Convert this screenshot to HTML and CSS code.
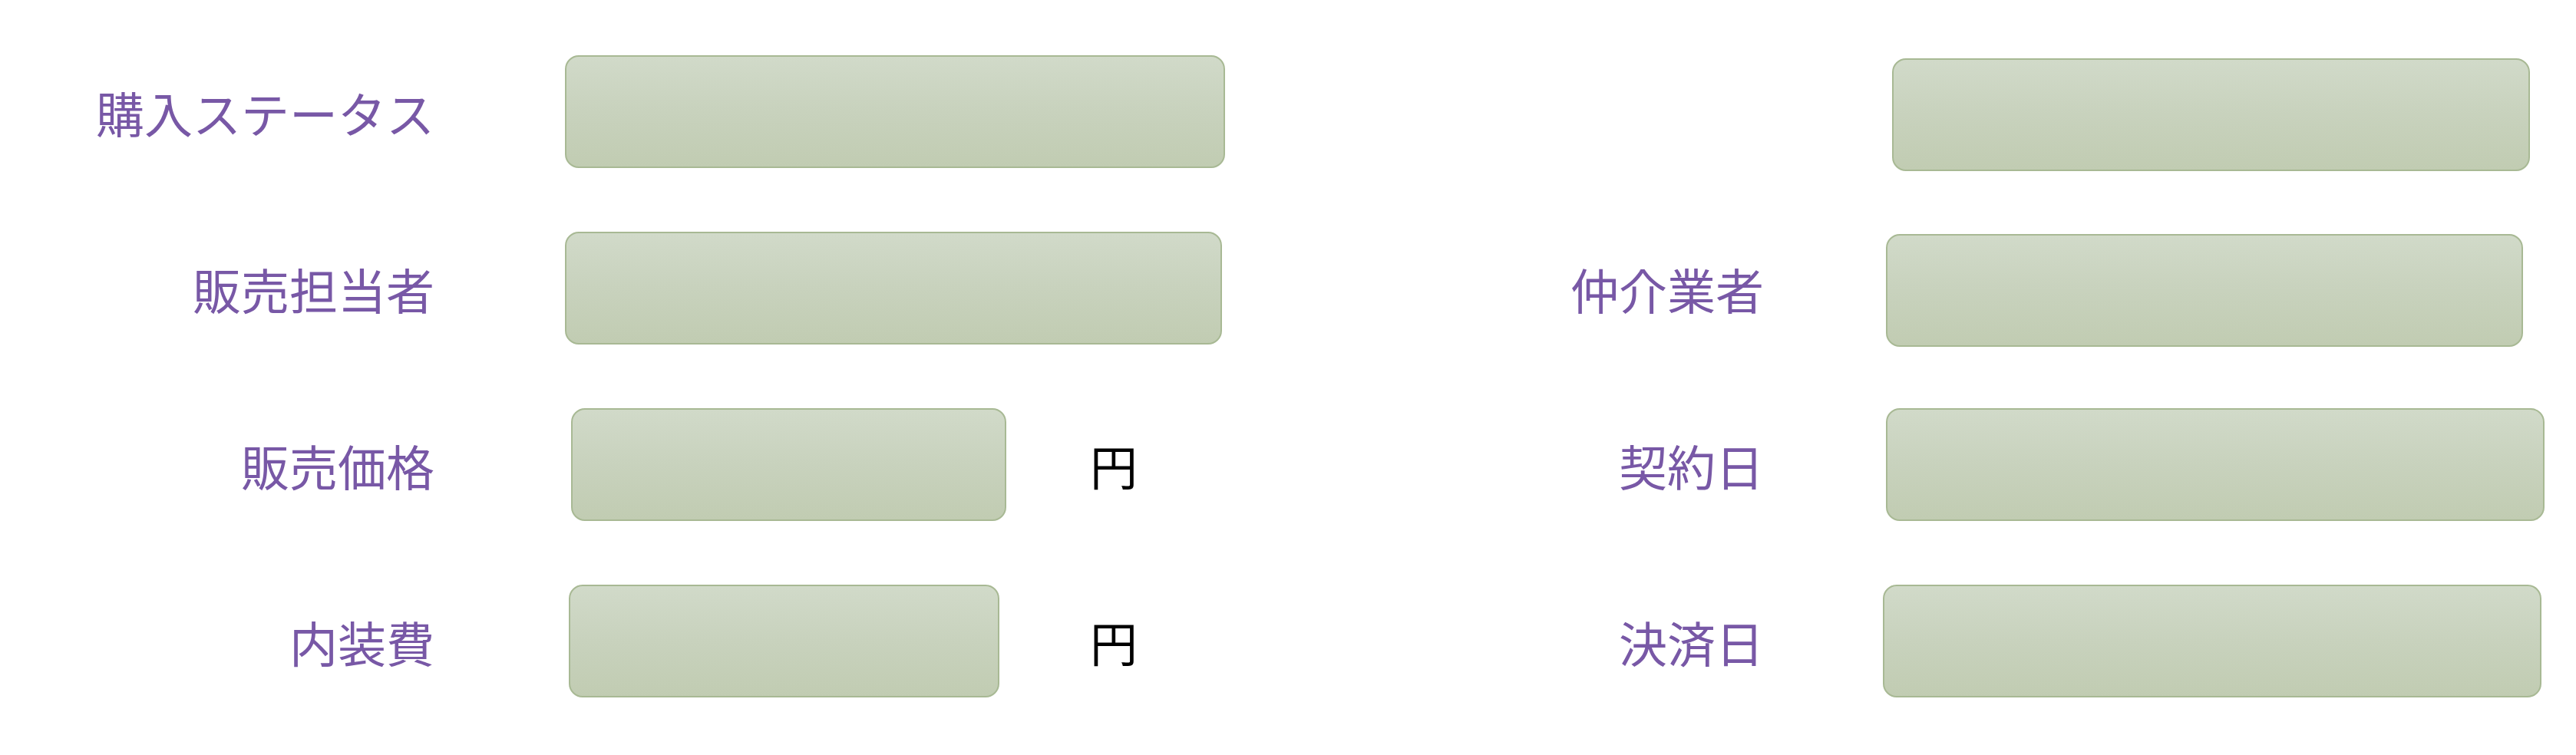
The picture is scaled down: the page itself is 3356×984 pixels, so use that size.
FILE: index.html
```html
<!DOCTYPE html>
<html lang="ja">
<head>
<meta charset="utf-8">
<title>購入情報</title>
<link rel="stylesheet" href="styles.css">
</head>
<body>
<main class="form">
  <div class="field field--left">
    <span class="label">購入ステータス</span>
    <div class="box box--r1l"></div>
  </div>
  <div class="field field--right">
    <span class="label"></span>
    <div class="box box--r1r box--down"></div>
  </div>

  <div class="field field--left">
    <span class="label">販売担当者</span>
    <div class="box box--r2l"></div>
  </div>
  <div class="field field--right">
    <span class="label">仲介業者</span>
    <div class="box box--r2r box--down-sm"></div>
  </div>

  <div class="field field--left">
    <span class="label">販売価格</span>
    <div class="box box--r3l"></div>
    <span class="unit unit--r3">円</span>
  </div>
  <div class="field field--right">
    <span class="label">契約日</span>
    <div class="box box--r3r"></div>
  </div>

  <div class="field field--left">
    <span class="label">内装費</span>
    <div class="box box--r4l"></div>
    <span class="unit unit--r4">円</span>
  </div>
  <div class="field field--right">
    <span class="label">決済日</span>
    <div class="box box--r4r"></div>
  </div>
</main>
</body>
</html>
```

FILE: styles.css
```css
html, body {
  margin: 0;
  padding: 0;
  background: #ffffff;
}

body {
  font-family: "Noto Sans CJK JP", "Noto Sans", sans-serif;
  width: 3356px;
  height: 984px;
  overflow: hidden;
}

.form {
  display: grid;
  grid-template-columns: 1700px 1656px;
  grid-auto-rows: 147px;
  row-gap: 83px;
  padding-top: 72px;
}

.field {
  display: flex;
  align-items: center;
  height: 147px;
}

.label {
  flex: none;
  text-align: right;
  font-size: 63px;
  line-height: 1;
  color: #7858a6;
  white-space: nowrap;
}

.field--left .label {
  width: 566px;
}

.field--right .label {
  width: 598px;
}

.box {
  flex: none;
  box-sizing: border-box;
  height: 147px;
  border: 2px solid #a8b994;
  border-radius: 18px;
  background: linear-gradient(to bottom, #d1dac9 0%, #c8d2bd 50%, #c1ccb2 100%);
}

.box--down {
  margin-top: 8px;
}

.box--down-sm {
  margin-top: 6px;
}

.box--r1l { margin-left: 170px; width: 860px; }
.box--r2l { margin-left: 170px; width: 856px; }
.box--r3l { margin-left: 178px; width: 567px; }
.box--r4l { margin-left: 175px; width: 561px; }

.box--r1r { margin-left: 167px; width: 831px; }
.box--r2r { margin-left: 159px; width: 830px; }
.box--r3r { margin-left: 159px; width: 858px; }
.box--r4r { margin-left: 155px; width: 858px; }

.unit {
  flex: none;
  font-size: 62px;
  line-height: 1;
  color: #000000;
}

.unit--r3 { margin-left: 109px; }
.unit--r4 { margin-left: 118px; }
```
